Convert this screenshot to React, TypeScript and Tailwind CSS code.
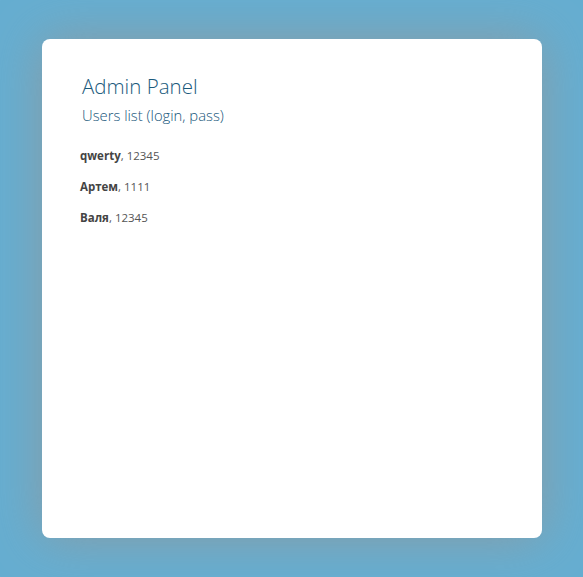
export default function App() {
  const users = [
    { login: "qwerty", pass: "12345" },
    { login: "Артем", pass: "1111" },
    { login: "Валя", pass: "12345" },
  ];
  return (
    <div
      className="w-[583px] h-[577px] bg-[#66aed1] pt-[39px] pl-[42px]"
      style={{ fontFamily: '"Open Sans", "Noto Sans", sans-serif' }}
    >
      <div className="w-[500px] h-[499px] bg-white rounded-[8px] shadow-[0_0_50px_rgba(150,150,150,0.75)] pl-[38px] pt-[33px]">
        <h1 className="pl-[2px] text-[20.5px] leading-[28px] font-light text-[#1a5a7c]">Admin Panel</h1>
        <h2 className="pl-[2px] text-[14.8px] leading-[20px] font-light text-[#15557a] mt-[5px]">Users list (login, pass)</h2>
        <div className="mt-[22px] flex flex-col gap-[13px] text-[11.5px] leading-[18px] text-[#555]">
          {users.map((u) => (
            <p key={u.login}>
              <b className="font-bold text-[#444]">{u.login}</b>, {u.pass}
            </p>
          ))}
        </div>
      </div>
    </div>
  );
}
